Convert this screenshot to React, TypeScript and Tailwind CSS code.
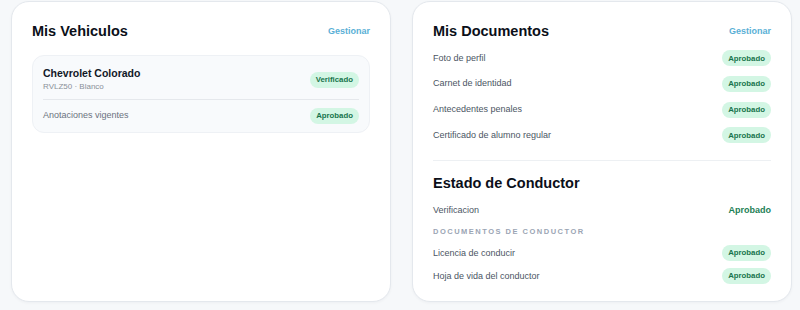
import React from "react";

const font = { fontFamily: '"Liberation Sans", Arial, sans-serif' };

function Badge({ children }: { children: React.ReactNode }) {
  return (
    <span className="inline-flex h-[16px] items-center rounded-full bg-[#d3f6e4] px-[6px] text-[7.8px] font-bold text-[#17744c]">
      {children}
    </span>
  );
}

function DocRow({ label, h = "h-[25.7px]" }: { label: string; h?: string }) {
  return (
    <div className={`flex ${h} items-center justify-between`}>
      <span className="text-[9px] text-[#4b5563]">{label}</span>
      <Badge>Aprobado</Badge>
    </div>
  );
}

export default function App() {
  return (
    <div style={font} className="flex h-[310px] w-[800px] gap-[21px] bg-[#f6f8fa] pl-[11px] pr-[8px] pt-[1px]">
      {/* Left card */}
      <div className="flex h-[301px] w-[380px] flex-col rounded-[18px] border border-[#e4e8ed] bg-white px-[20px] pt-[20px] shadow-[0_1px_3px_rgba(15,23,42,0.04)]">
        <div className="flex h-[20px] items-center justify-between">
          <h2 className="text-[14.5px] font-bold text-[#0b0f19]">Mis Vehiculos</h2>
          <span className="text-[9px] font-bold text-[#5ab0d6]">Gestionar</span>
        </div>
        <div className="mt-[13px] rounded-[12px] border border-[#eef1f5] bg-[#f8fafc] px-[10px] pb-[2px]">
          <div className="flex items-center justify-between pt-[11px] pb-[6px]">
            <div className="flex flex-col">
              <span className="text-[10.5px] leading-[13px] font-bold text-[#111827]">Chevrolet Colorado</span>
              <span className="text-[8px] leading-[13px] text-[#8a9099]">RVLZ50 · Blanco</span>
            </div>
            <Badge>Verificado</Badge>
          </div>
          <div className="border-t border-[#e5e8ec]" />
          <div className="flex h-[30px] items-center justify-between pt-[1px]">
            <span className="text-[9px] text-[#6b7280]">Anotaciones vigentes</span>
            <Badge>Aprobado</Badge>
          </div>
        </div>
      </div>

      {/* Right card */}
      <div className="flex h-[301px] w-[380px] flex-col rounded-[18px] border border-[#e4e8ed] bg-white px-[20px] pt-[20px] shadow-[0_1px_3px_rgba(15,23,42,0.04)]">
        <div className="flex h-[20px] items-center justify-between">
          <h2 className="text-[14.5px] font-bold text-[#0b0f19]">Mis Documentos</h2>
          <span className="text-[9px] font-bold text-[#5ab0d6]">Gestionar</span>
        </div>
        <div className="mt-[3.5px] flex flex-col">
          <DocRow label="Foto de perfil" />
          <DocRow label="Carnet de identidad" />
          <DocRow label="Antecedentes penales" />
          <DocRow label="Certificado de alumno regular" />
        </div>
        <div className="mt-[12px] border-t border-[#edf0f3]" />
        <h2 className="mt-[13px] flex h-[20px] items-center text-[14.5px] font-bold text-[#0b0f19]">
          Estado de Conductor
        </h2>
        <div className="mt-[5px] flex h-[22px] items-center justify-between">
          <span className="text-[9px] text-[#4b5563]">Verificacion</span>
          <span className="text-[9px] font-bold text-[#1d8056]">Aprobado</span>
        </div>
        <div className="mt-[4px] flex h-[12px] items-center text-[7.5px] font-bold tracking-[1.5px] text-[#9ba5b4]">
          DOCUMENTOS DE CONDUCTOR
        </div>
        <div className="mt-[5px] flex flex-col">
          <DocRow label="Licencia de conducir" h="h-[22px]" />
          <DocRow label="Hoja de vida del conductor" h="h-[24px]" />
        </div>
      </div>
    </div>
  );
}
